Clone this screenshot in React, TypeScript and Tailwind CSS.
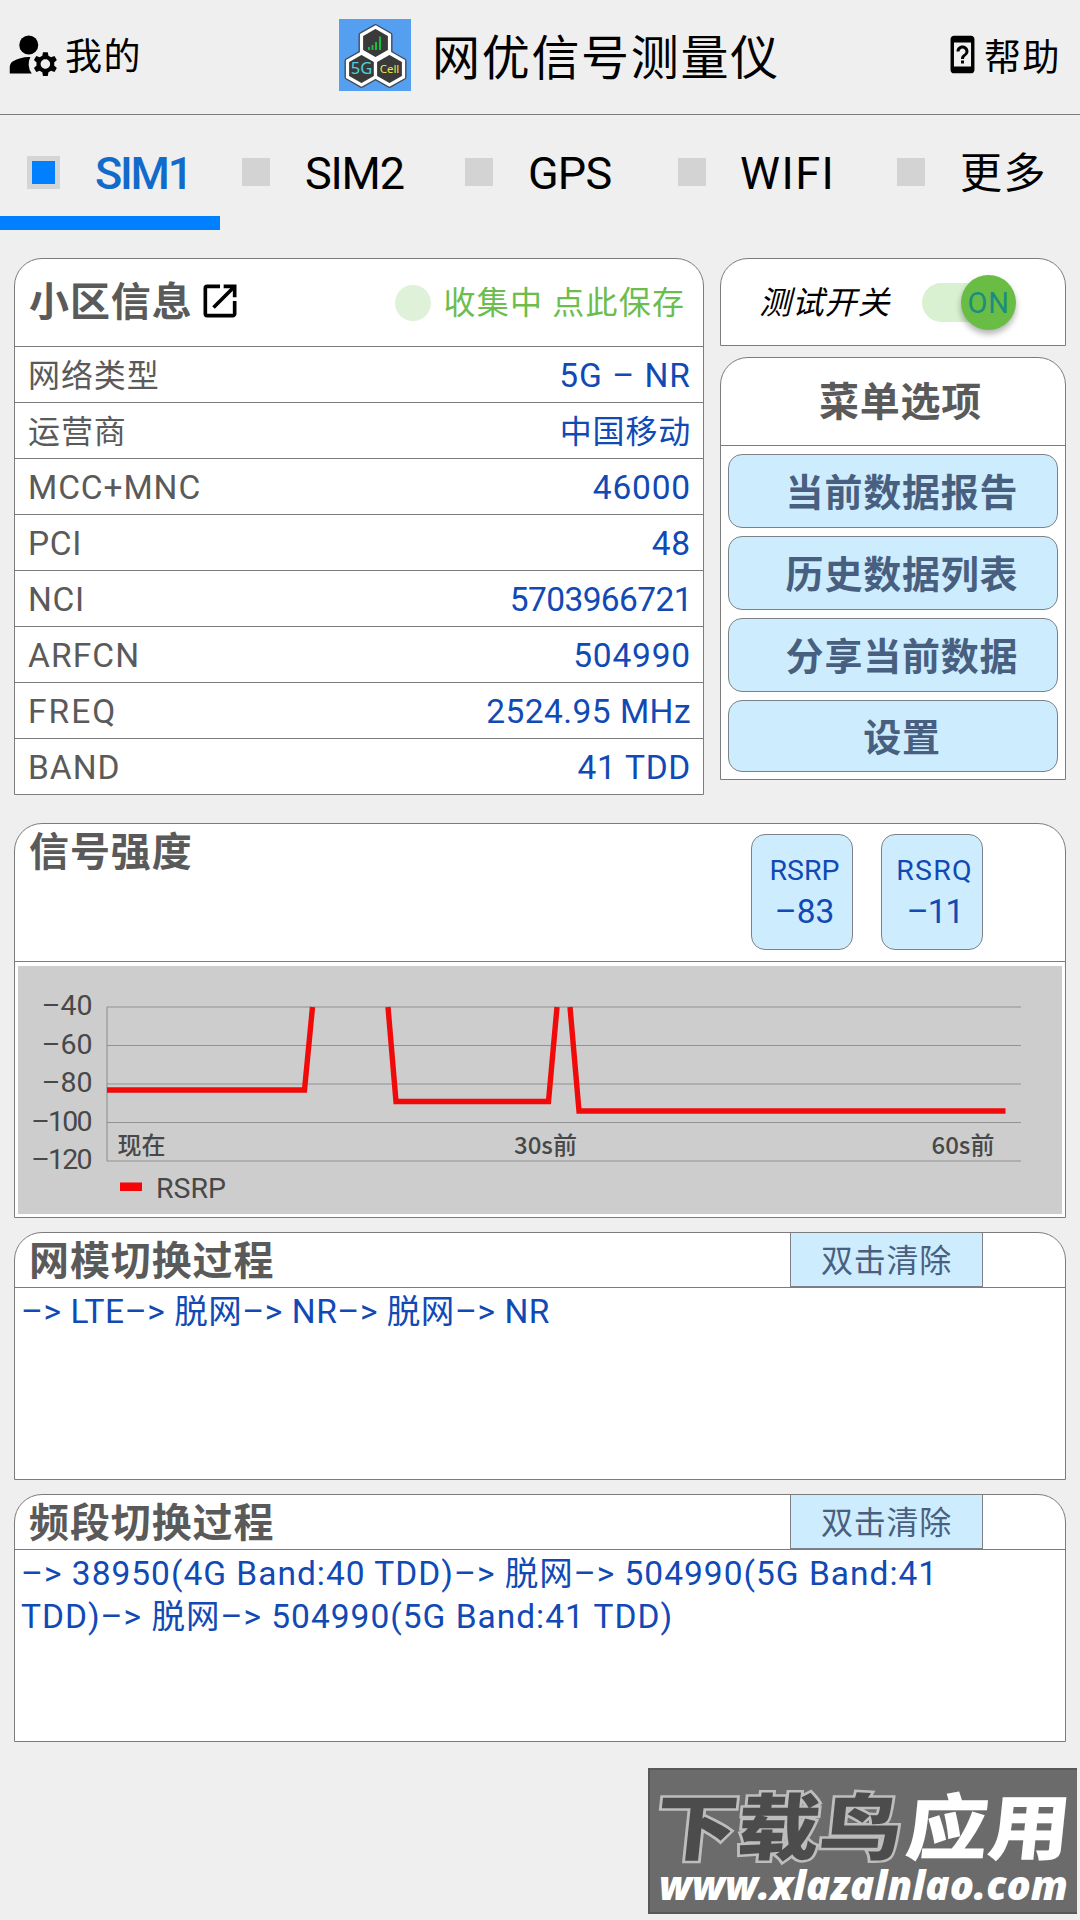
import React from 'react';
import { MdManageAccounts, MdDeviceUnknown, MdOpenInNew } from 'react-icons/md';

interface Tab {
  label: string;
  className: string;
  textClass: string;
}

interface CellRow {
  label: string;
  value: string;
  labelClass: string;
  valueClass: string;
}

const TABS: Tab[] = [
  { label: 'SIM2', className: 'w-[223px] pl-[22px]', textClass: 'ml-[35px] text-[45px] tracking-[-1.2px]' },
  { label: 'GPS', className: 'w-[213px] pl-[22px]', textClass: 'ml-[35px] text-[45px] tracking-[-0.8px]' },
  { label: 'WIFI', className: 'w-[219px] pl-[22px]', textClass: 'ml-[34px] text-[45px] tracking-[1.5px]' },
  { label: '更多', className: 'pl-[22px]', textClass: 'ml-[35px] text-[42px] tracking-[1.4px]' },
];

const CELL_ROWS: CellRow[] = [
  { label: '网络类型', value: '5G – NR', labelClass: 'text-[32px] tracking-[0.9px]', valueClass: 'text-[33.5px] tracking-[1px]' },
  { label: '运营商', value: '中国移动', labelClass: 'text-[32px] tracking-[0.9px]', valueClass: 'text-[32px] tracking-[0.8px]' },
  { label: 'MCC+MNC', value: '46000', labelClass: 'text-[33.5px] tracking-[0.9px]', valueClass: 'text-[33.5px] tracking-[0.8px]' },
  { label: 'PCI', value: '48', labelClass: 'text-[33.5px] tracking-[0.6px]', valueClass: 'text-[33.5px] tracking-[0.8px]' },
  { label: 'NCI', value: '5703966721', labelClass: 'text-[33.5px] tracking-[0.6px]', valueClass: 'text-[33.5px] tracking-[-0.6px] -mr-[1px]' },
  { label: 'ARFCN', value: '504990', labelClass: 'text-[33.5px] tracking-[1.1px]', valueClass: 'text-[33.5px] tracking-[0.8px]' },
  { label: 'FREQ', value: '2524.95 MHz', labelClass: 'text-[33.5px] tracking-[2px]', valueClass: 'text-[33.5px] tracking-[0.45px]' },
  { label: 'BAND', value: '41 TDD', labelClass: 'text-[33.5px] tracking-[1px]', valueClass: 'text-[33.5px] tracking-[0.7px]' },
];

const MENU_ITEMS = ['当前数据报告', '历史数据列表', '分享当前数据', '设置'];

const GRID_LINES = [
  { y: 41, label: '–40', spacing: 0 },
  { y: 79.5, label: '–60', spacing: 0 },
  { y: 118, label: '–80', spacing: 0 },
  { y: 156.5, label: '–100', spacing: -1.8 },
  { y: 195, label: '–120', spacing: -1.8 },
];

const Logo: React.FC = () => (
  <svg width="72" height="72" viewBox="0 0 72 72">
    <rect width="72" height="72" fill="#559ff0" />
    <g fill="#3a3a3a" stroke="#3d4a5c" strokeWidth="6" strokeLinejoin="round">
      <path d="M36.500 8l14 8v16l-14 8-14-8V16z" />
      <path d="M22.500 34l14 8v16l-14 8-14-8V42z" />
      <path d="M50.500 34l14 8v16l-14 8-14-8V42z" />
    </g>
    <g fill="#3a3a3a" stroke="#fff" strokeWidth="3.2">
      <path d="M36.500 8l14 8v16l-14 8-14-8V16z" />
      <path d="M22.500 34l14 8v16l-14 8-14-8V42z" />
      <path d="M50.500 34l14 8v16l-14 8-14-8V42z" />
    </g>
    <path d="M30 31v-3M33.500 31v-5M37 31v-8M41 31V17.500" stroke="#12c83c" strokeWidth="1.9" fill="none" />
    <text x="22.5" y="55" fontSize="16.5" textAnchor="middle" fill="#4fd0dc" className="font-['Noto_Sans']">5G</text>
    <text x="50.5" y="54" fontSize="11.5" textAnchor="middle" fill="#e8e84c" className="font-['Noto_Sans']">Cell</text>
  </svg>
);

const Header: React.FC = () => (
  <header className="flex h-[115px] items-start border-b border-[#7c7c7c] text-black">
    <div className="flex w-[339px] pt-[26px] pl-[5px]">
      <MdManageAccounts className="size-[57px]" />
      <span className="ml-[3px] text-[37px] leading-[63px] tracking-[1.5px]">我的</span>
    </div>
    <div className="flex w-[601px] pt-[19px]">
      <Logo />
      <h1 className="ml-[21px] text-[48px] leading-[79px] tracking-[1.7px]">网优信号测量仪</h1>
    </div>
    <div className="flex pt-[28px]">
      <MdDeviceUnknown className="mt-[6px] ml-[2px] size-[41px]" />
      <span className="ml-[1px] text-[37px] leading-[61px] tracking-[1.5px]">帮助</span>
    </div>
  </header>
);

const Tabs: React.FC = () => (
  <nav className="flex h-[115px] text-black">
    <div className="flex w-[220px] flex-col justify-between">
      <div className="flex h-[101px] pl-[27px]">
        <div className="mt-[41px] flex size-[33px] items-center justify-center bg-[#d3d5d6]">
          <div className="size-[23px] bg-[#0080ff]" />
        </div>
        <span className="ml-[35px] text-[45px] leading-[118px] font-medium tracking-[-2.2px] text-[#126acb]">SIM1</span>
      </div>
      <div className="h-[14px] bg-[#0080ff]" />
    </div>
    {TABS.map(tab => (
      <div key={tab.label} className={`flex ${tab.className}`}>
        <div className="mt-[43px] size-[28px] bg-[#d3d3d3]" />
        <span className={`leading-[118px] ${tab.textClass}`}>{tab.label}</span>
      </div>
    ))}
  </nav>
);

const CellInfo: React.FC = () => (
  <section className="w-[690px] rounded-t-[28px] border border-[#7c7c7c] bg-white">
    <div className="flex h-[88px] items-center border-b border-[#7c7c7c] pl-[14px]">
      <h2 className="pt-[1px] text-[40px] font-bold tracking-[0.9px] text-[#5a5a5a]">小区信息</h2>
      <MdOpenInNew className="mb-[3px] ml-[5px] size-[44px] text-black" />
      <div className="ml-[153px] size-[36px] rounded-full bg-[#dff2d9]" />
      <span className="ml-[13px] pt-[1px] text-[32px] tracking-[1.2px] text-[#6cbd4d]">收集中 点此保存</span>
    </div>
    {CELL_ROWS.map(row => (
      <div
        key={row.label}
        className="flex h-[56px] items-center justify-between border-b border-[#7c7c7c] pt-[3px] pr-[12px] pl-[13px] last:h-[55px] last:border-b-0"
      >
        <span className={`text-[#5a5a5a] ${row.labelClass}`}>{row.label}</span>
        <span className={`text-[#1149b5] ${row.valueClass}`}>{row.value}</span>
      </div>
    ))}
  </section>
);

const SidePanel: React.FC = () => (
  <div className="w-[346px]">
    <div className="flex h-[88px] items-center rounded-t-[28px] border border-[#7c7c7c] bg-white pl-[38px]">
      <span className="pt-[1px] text-[32px] tracking-[0.8px] text-black italic">测试开关</span>
      <div className="relative ml-[32px] h-[39px] w-[88px] rounded-full bg-[#d9f0d1]">
        <div className="absolute top-[-8px] right-[-6px] flex size-[55px] items-center justify-center rounded-full bg-[#69bd45] pt-[3px] text-[29px] tracking-[1px] text-[#1d8c7c] shadow-[0_4px_6px_rgba(0,0,0,0.3)]">
          ON
        </div>
      </div>
    </div>
    <div className="mt-[11px] h-[423px] rounded-t-[28px] border border-[#7c7c7c] bg-white">
      <h2 className="h-[88px] border-b border-[#7c7c7c] pl-[15px] text-center text-[40px] leading-[90px] font-bold tracking-[0.7px] text-[#5a5a5a]">
        菜单选项
      </h2>
      <div className="flex flex-col gap-[8px] px-[7px] pt-[8px]">
        {MENU_ITEMS.map(item => (
          <button
            key={item}
            className="h-[74px] rounded-[14px] border border-[#7c8288] bg-[#cdedfe] pt-[3px] pl-[18px] text-[38px] leading-[70px] font-bold tracking-[0.8px] text-[#485f7f] last:h-[72px] last:leading-[68px]"
          >
            {item}
          </button>
        ))}
      </div>
    </div>
  </div>
);

interface MetricProps {
  name: string;
  value: string;
  className: string;
  nameClass?: string;
  valueClass?: string;
}

const Metric: React.FC<MetricProps> = ({ name, value, className, nameClass = '', valueClass = '' }) => (
  <div className={`flex h-[116px] w-[102px] flex-col items-center rounded-[14px] border border-[#7c8288] bg-[#cdedfe] pt-[15px] pl-[5px] text-[#1149b5] ${className}`}>
    <span className={`text-[28.5px] leading-[41px] ${nameClass}`}>{name}</span>
    <span className={`text-[33.5px] leading-[42px] ${valueClass}`}>{value}</span>
  </div>
);

const SignalChart: React.FC = () => (
  <svg width="1044" height="248" viewBox="0 0 1044 248" className="mt-[4px] ml-[3px] block bg-[#cdcdcd]">
    {GRID_LINES.map(line => (
      <g key={line.label}>
        <line x1="89" x2="1003" y1={line.y} y2={line.y} stroke="#929292" strokeWidth="1.2" />
        <text x={74.5 + line.spacing} y={line.y + 8} textAnchor="end" fontSize="28.5" letterSpacing={line.spacing} fill="#484848">
          {line.label}
        </text>
      </g>
    ))}
    <line x1="89" x2="89" y1="41" y2="195" stroke="#8a8a8a" strokeWidth="1" />
    <g fontSize="24" fontWeight="500" fill="#484848" className="font-['Noto_Sans_CJK_SC']">
      <text x="99.500" y="188">现在</text>
      <text x="496" y="188">30s前</text>
      <text x="913.500" y="188">60s前</text>
    </g>
    <g fill="none" stroke="#f00a0a" strokeWidth="5.4">
      <path d="M89 124H286.500L294.500 41" />
      <path d="M370 41L378 135.500H530.500L539 41" />
      <path d="M552 41L561 145H987.500" />
    </g>
    <rect x="102" y="216.500" width="22" height="8.500" fill="#f50505" />
    <text x="138" y="232" fontSize="28.5" fill="#484848">RSRP</text>
  </svg>
);

const SignalPanel: React.FC = () => (
  <section className="mt-[28px] h-[395px] rounded-t-[28px] border border-[#7c7c7c] bg-white">
    <div className="flex h-[138px] border-b border-[#7c7c7c] pl-[14px]">
      <h2 className="w-[722px] text-[40px] leading-[58px] font-bold tracking-[0.9px] text-[#5a5a5a]">信号强度</h2>
      <Metric name="RSRP" value="–83" className="mt-[10px]" />
      <Metric
        name="RSRQ"
        value="–11"
        className="mt-[10px] ml-[28px]"
        nameClass="tracking-[1.2px]"
        valueClass="tracking-[-1px] pl-[1px]"
      />
    </div>
    <SignalChart />
  </section>
);

const LogPanel: React.FC<{ title: string; children: React.ReactNode }> = ({ title, children }) => (
  <section className="mt-[14px] h-[248px] rounded-t-[28px] border border-[#7c7c7c] bg-white">
    <div className="flex h-[55px] justify-between border-b border-[#7c7c7c] pr-[82px] pl-[14px]">
      <h2 className="text-[40px] leading-[58px] font-bold tracking-[0.9px] text-[#5a5a5a]">{title}</h2>
      <button className="h-[54px] w-[193px] border-x border-b border-[#7c8288] bg-[#cdedfe] text-[32px] leading-[56px] tracking-[0.8px] text-[#4a5f7f]">
        双击清除
      </button>
    </div>
    <div className="pt-[2px] pl-[6px] text-[33.5px] leading-[43px] whitespace-nowrap text-[#1149b5]">{children}</div>
  </section>
);

const Watermark: React.FC = () => (
  <div className="mt-[26px] ml-[648px] h-[146px] w-[429px] border-y-2 border-l-2 border-[#585858] bg-[#6b6b6b]">
    <svg width="427" height="142" viewBox="0 0 427 142" className="overflow-visible">
      <g transform="translate(3 84) skewX(-6) scale(1.14 1)" fontSize="72" fontWeight="900" className="font-['Noto_Sans_CJK_SC']">
        <text fill="#4c4c4c" stroke="#bdbdbd" strokeWidth="5" paintOrder="stroke">下载鸟</text>
        <text x="220" fill="#fff">应用</text>
      </g>
      <text x="9" y="130" fontSize="40" fontWeight="800" fontStyle="italic" fill="#fff" textLength="409" lengthAdjust="spacingAndGlyphs" className="font-['Open_Sans']">
        www.xlazalnlao.com
      </text>
    </svg>
  </div>
);

export default function App() {
  return (
    <div className="h-[1920px] w-[1080px] overflow-hidden bg-[#efefef] font-['Roboto','Noto_Sans_CJK_SC',sans-serif]">
      <Header />
      <Tabs />
      <main className="px-[14px] pt-[28px]">
        <div className="flex gap-[16px]">
          <CellInfo />
          <SidePanel />
        </div>
        <SignalPanel />
        <LogPanel title="网模切换过程">
          <p className="tracking-[0.55px]">–&gt; LTE–&gt; 脱网–&gt; NR–&gt; 脱网–&gt; NR</p>
        </LogPanel>
        <LogPanel title="频段切换过程">
          <p className="tracking-[1px]">–&gt; 38950(4G Band:40 TDD)–&gt; 脱网–&gt; 504990(5G Band:41</p>
          <p className="tracking-[1px]">TDD)–&gt; 脱网–&gt; 504990(5G Band:41 TDD)</p>
        </LogPanel>
      </main>
      <Watermark />
    </div>
  );
}
